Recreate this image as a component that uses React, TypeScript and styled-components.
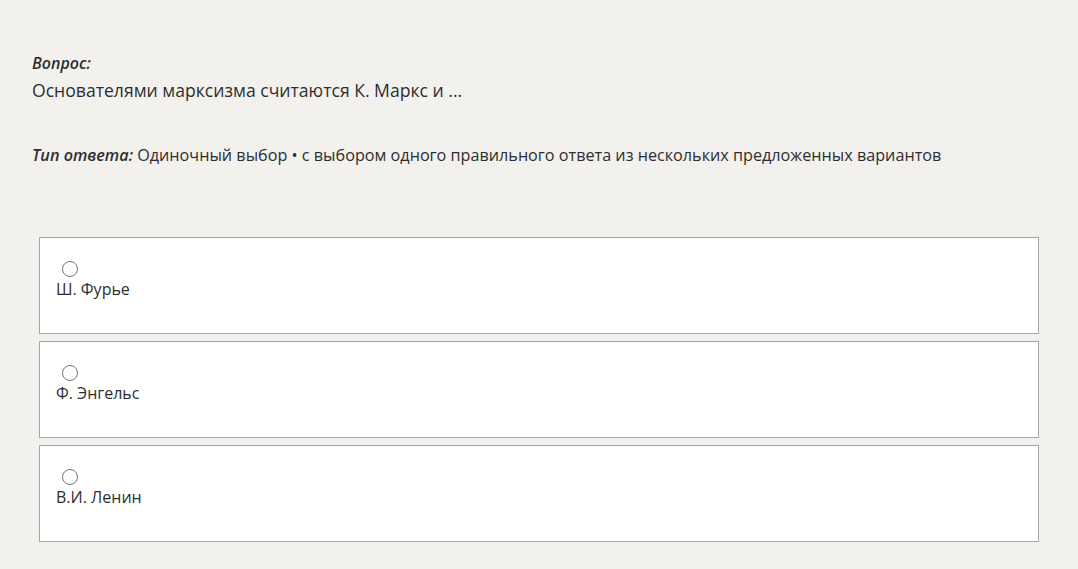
import React from "react";
import styled, { createGlobalStyle } from "styled-components";

const GlobalStyle = createGlobalStyle`
  body {
    margin: 0;
    background: #f2f1ee;
    font-family: "Open Sans", "Liberation Sans", sans-serif;
    color: #2e2e2e;
  }
`;

const Page = styled.div`
  padding: 52px 32px 0 32px;
`;

const Label = styled.div`
  font-size: 16px;
  font-weight: 600;
  font-style: italic;
  line-height: 22px;
`;

const Question = styled.div`
  font-size: 17.6px;
  line-height: 26px;
  margin-top: 3px;
`;

const TypeLine = styled.div`
  margin-top: 41px;
  font-size: 16.2px;
  line-height: 22px;
`;

const TypeLabel = styled.span`
  font-weight: 600;
  font-style: italic;
`;

const Options = styled.div`
  display: flex;
  flex-direction: column;
  gap: 7px;
  margin: 71px 7px 0 7px;
`;

const Card = styled.label`
  display: flex;
  flex-direction: column;
  align-items: flex-start;
  background: #fff;
  border: 1px solid #a6a6a6;
  height: 97px;
  box-sizing: border-box;
  padding: 23px 16px 0 16px;
  cursor: pointer;
`;

const Radio = styled.span`
  width: 16px;
  height: 16px;
  box-sizing: border-box;
  border: 1px solid #767676;
  border-radius: 50%;
  margin-left: 6px;
  background: #fff;
`;

const OptionText = styled.span`
  font-size: 16px;
  line-height: 22px;
  margin-top: 1px;
`;

const options = ["Ш. Фурье", "Ф. Энгельс", "В.И. Ленин"];

export default function App() {
  return (
    <>
      <GlobalStyle />
      <Page>
        <Label>Вопрос:</Label>
        <Question>Основателями марксизма считаются К. Маркс и ...</Question>
        <TypeLine>
          <TypeLabel>Тип ответа:</TypeLabel> Одиночный выбор • с выбором одного
          правильного ответа из нескольких предложенных вариантов
        </TypeLine>
        <Options>
          {options.map((o) => (
            <Card key={o}>
              <Radio />
              <OptionText>{o}</OptionText>
            </Card>
          ))}
        </Options>
      </Page>
    </>
  );
}
